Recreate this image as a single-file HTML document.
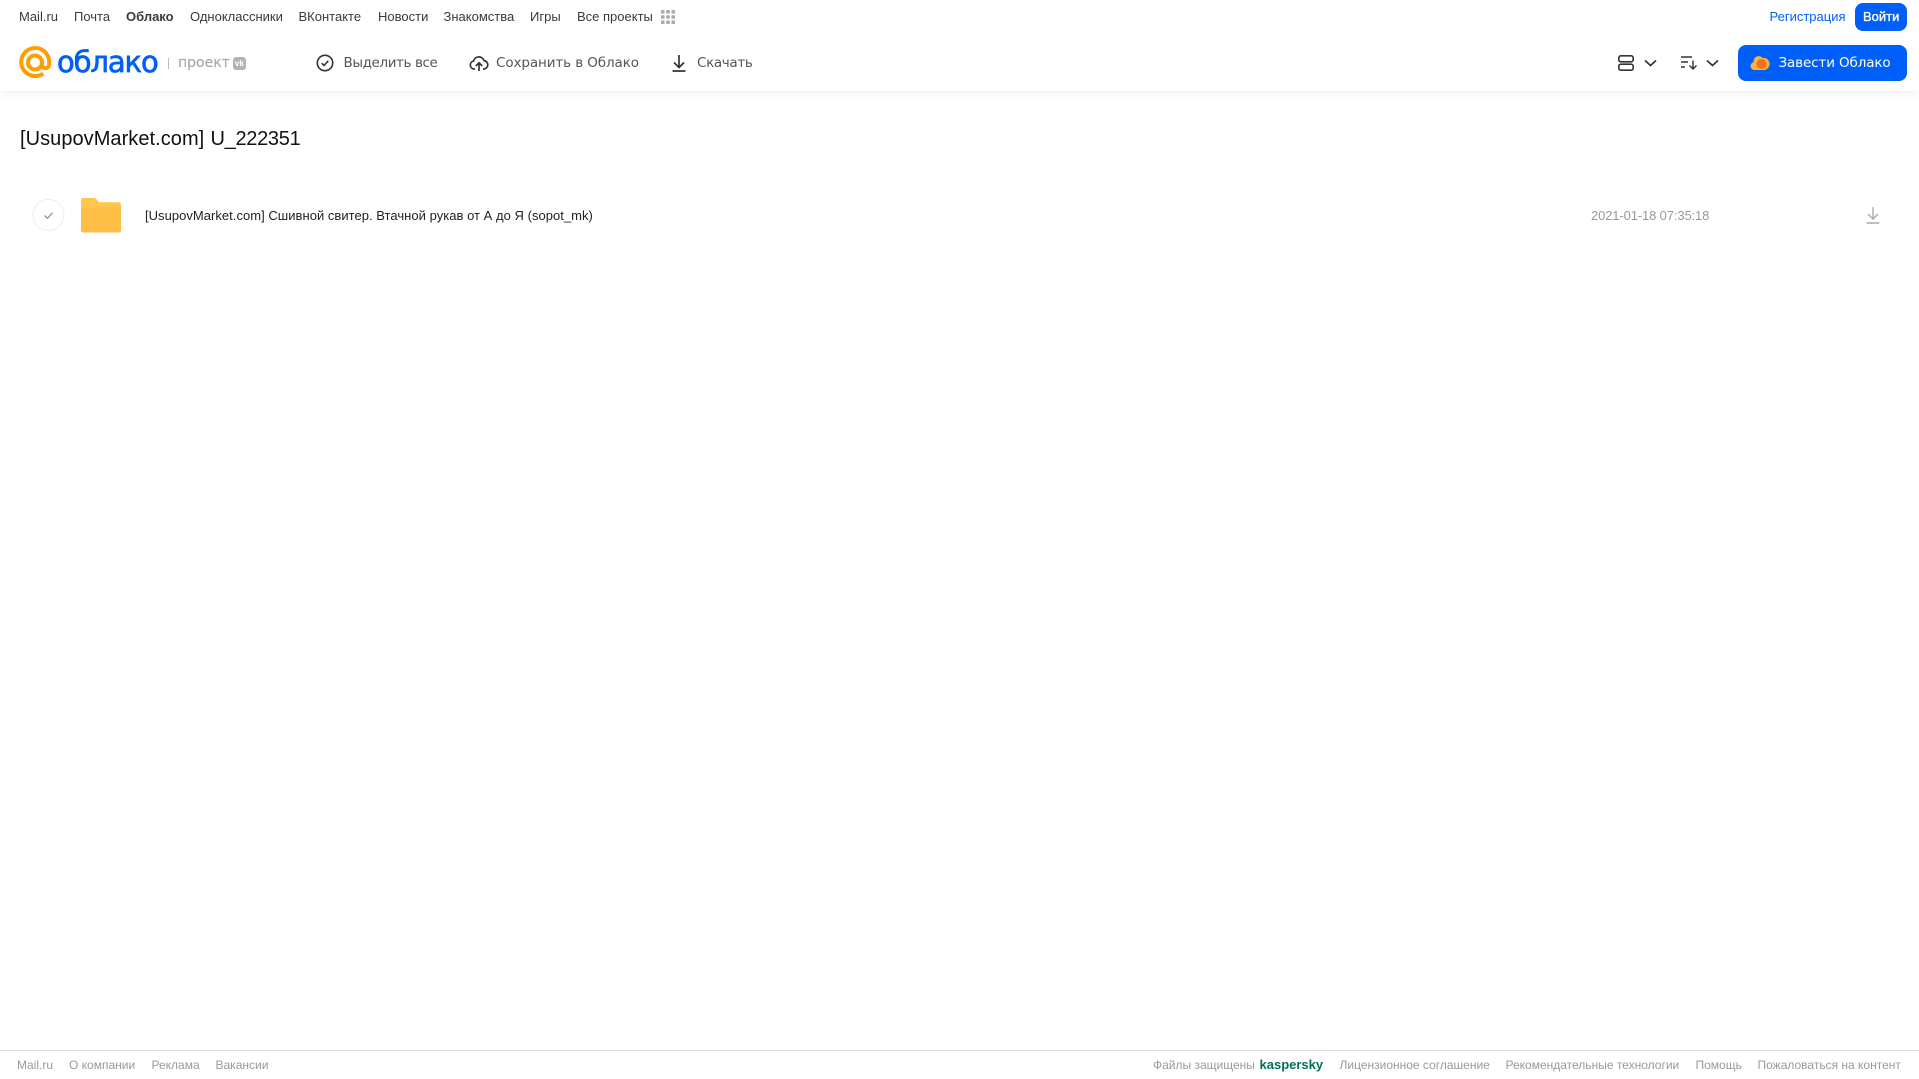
<!DOCTYPE html>
<html lang="ru"><head><meta charset="utf-8"><title>Облако</title>
<style>
html,body{margin:0;padding:0;background:#fff}
body{width:1919px;height:1079px;position:relative;overflow:hidden;font-family:"Liberation Sans",Arial,sans-serif}
.t{position:absolute;white-space:nowrap;line-height:16px}
.n{top:9px;font-size:13px;color:#3a3a3a}
.g{top:55px;font-family:"DejaVu Sans",sans-serif;font-size:13.5px;color:#555;line-height:16px}
.f{top:1057px;font-size:12px;color:#999}
svg{position:absolute;overflow:visible}
.hd{position:absolute;left:0;top:0;width:1919px;height:91px;background:#fff;box-shadow:0 2px 10px rgba(0,0,0,.07)}
</style></head><body>
<div class="hd"></div>
<span class="t n" style="left:19px">Mail.ru</span>
<span class="t n" style="left:74px">Почта</span>
<span class="t n" style="left:126px;font-weight:bold">Облако</span>
<span class="t n" style="left:190px">Одноклассники</span>
<span class="t n" style="left:298.5px">ВКонтакте</span>
<span class="t n" style="left:378px">Новости</span>
<span class="t n" style="left:443.5px">Знакомства</span>
<span class="t n" style="left:530px">Игры</span>
<span class="t n" style="left:577px">Все проекты</span>
<svg style="left:661px;top:10px" width="15" height="15" fill="#aaa"><rect width="3.6" height="3.6" rx=".8"/><rect x="5.2" width="3.6" height="3.6" rx=".8"/><rect x="10.4" width="3.6" height="3.6" rx=".8"/><rect y="5.2" width="3.6" height="3.6" rx=".8"/><rect x="5.2" y="5.2" width="3.6" height="3.6" rx=".8"/><rect x="10.4" y="5.2" width="3.6" height="3.6" rx=".8"/><rect y="10.4" width="3.6" height="3.6" rx=".8"/><rect x="5.2" y="10.4" width="3.6" height="3.6" rx=".8"/><rect x="10.4" y="10.4" width="3.6" height="3.6" rx=".8"/></svg>
<span class="t n" style="left:1769.5px;color:#005ff9">Регистрация</span>
<div style="position:absolute;left:1855px;top:3px;width:52px;height:28px;border-radius:8px;background:#005ff9"></div>
<span class="t n" style="left:1863px;color:#fff;-webkit-text-stroke:.35px #fff">Войти</span>

<svg style="left:0;top:0" width="70" height="90" fill="none"><path d="M42 62.5v2a3.6 3.6 0 0 0 7.200 0v-2.500a14 14 0 1 0-6 11.500" stroke="#ff9e00" stroke-width="4"/><circle cx="35" cy="62.500" r="7" stroke="#ff9e00" stroke-width="4"/></svg>
<span class="t" style="left:57px;top:44px;line-height:36px;font-family:'DejaVu Sans',sans-serif;font-size:29px;color:#005ff9;-webkit-text-stroke:.7px #005ff9;letter-spacing:-1.1px">облако</span>
<div style="position:absolute;left:168px;top:58px;width:1px;height:11px;background:#bbb"></div>
<span class="t" style="left:178px;top:55px;font-family:'DejaVu Sans',sans-serif;font-size:14px;color:#aaa;-webkit-text-stroke:.2px #aaa">проект</span>
<div style="position:absolute;left:233px;top:57px;width:13px;height:13px;border-radius:3px;background:#b4b4b4;color:#fff;font:bold 8px/13px 'Liberation Sans',sans-serif;text-align:center">vk</div>

<svg style="left:316px;top:54px" width="18" height="18" fill="none" stroke="#333" stroke-width="1.600"><circle cx="9" cy="9" r="7.700"/><path d="M5.700 9.200l2.300 2.300 4.300-4.700"/></svg>
<span class="t g" style="left:343.500px;letter-spacing:-.4px">Выделить все</span>
<svg style="left:469px;top:54px" width="20" height="18" fill="none" stroke="#333" stroke-width="1.700"><path d="M6 15H5a4 4 0 0 1-.5-7.900A5.500 5.500 0 0 1 15 6.500a4.300 4.300 0 0 1 .2 8.500H14"/><path d="M10 17V9M6.800 12l3.200-3.200 3.200 3.200"/></svg>
<span class="t g" style="left:496px;letter-spacing:-.1px">Сохранить в Облако</span>
<svg style="left:671px;top:54px" width="16" height="18" fill="none" stroke="#333" stroke-width="1.700"><path d="M8 1v12M3 8.500l5 5 5-5M1.500 17h13"/></svg>
<span class="t g" style="left:697px;letter-spacing:-.35px">Скачать</span>

<svg style="left:1618px;top:55px" width="17" height="17" fill="none" stroke="#333" stroke-width="1.600"><rect x=".8" y=".8" width="14.400" height="6" rx="2"/><rect x=".8" y="9.200" width="14.400" height="6" rx="2"/></svg>
<svg style="left:1644px;top:59px" width="13" height="8" fill="none" stroke="#333" stroke-width="1.700"><path d="M1 1.500l5.500 5 5.500-5"/></svg>
<svg style="left:1681px;top:56px" width="17" height="15" fill="none" stroke="#333" stroke-width="1.400"><path d="M0 1h11M0 6h7M0 11h4M12 4.500V13M8.500 9.500l3.500 3.500 3.500-3.500"/></svg>
<svg style="left:1706px;top:59px" width="13" height="8" fill="none" stroke="#333" stroke-width="1.700"><path d="M1 1.500l5.500 5 5.500-5"/></svg>
<div style="position:absolute;left:1738px;top:45px;width:169px;height:36px;border-radius:8px;background:#005ff9"></div>
<svg style="left:1750px;top:54px" width="19" height="17"><path d="M4.500 16a4 4 0 0 1-.8-7.900A5 5 0 0 1 12.500 4a5 5 0 0 1 2 12z" fill="#ffb13d"/><circle cx="11.500" cy="10" r="5" fill="#f2711c"/></svg>
<span class="t g" style="left:1778.500px;color:#fff;letter-spacing:-.13px">Завести Облако</span>

<div class="t" style="left:20px;top:127px;line-height:24px;font-size:20px;color:#111;letter-spacing:.05px">[UsupovMarket.com]</div>
<div class="t" style="left:210.500px;top:127px;line-height:24px;font-size:20px;color:#111;letter-spacing:-.3px">U_222351</div>

<svg style="left:32px;top:198px" width="34" height="34" fill="none"><circle cx="16.500" cy="17" r="15.500" stroke="#eee"/><path d="M12.500 17.500l3 2.800 5-5.600" stroke="#999" stroke-width="1.400"/></svg>
<svg style="left:81px;top:198px" width="40" height="35"><path d="M2 0h10.500c2 0 3 1 4 2.500C17.500 4 18.500 4.300 20 4.300h17.500A2.500 2.500 0 0 1 40 6.800V32a2.500 2.500 0 0 1-2.500 2.500h-35A2.500 2.500 0 0 1 0 32V2a2 2 0 0 1 2-2z" fill="#ffc54d"/><path d="M0 9.500h40V32a2.500 2.500 0 0 1-2.500 2.500h-35A2.500 2.500 0 0 1 0 32z" fill="#ffbf47"/></svg>
<span class="t" style="left:145px;top:208px;font-size:13px;color:#222;letter-spacing:.03px">[UsupovMarket.com] Сшивной свитер. Втачной рукав от А до Я (sopot_mk)</span>
<span class="t" style="left:1591px;top:208px;font-size:13px;color:#999;letter-spacing:-.13px">2021-01-18 07:35:18</span>
<svg style="left:1866px;top:207px" width="14" height="17" fill="none" stroke="#aaa" stroke-width="1.400"><path d="M7 0v11.500M2 7l5 5 5-5M.5 16h13"/></svg>

<div style="position:absolute;left:0;top:1050px;width:1919px;height:1px;background:#dcdcdc"></div>
<span class="t f" style="left:17px">Mail.ru</span>
<span class="t f" style="left:69px">О компании</span>
<span class="t f" style="left:151.500px">Реклама</span>
<span class="t f" style="left:215.500px">Вакансии</span>
<span class="t f" style="left:1153px">Файлы защищены</span>
<span class="t f" style="left:1259.500px;font-weight:bold;color:#00705c;font-size:13px">kaspersky</span>
<span class="t f" style="left:1339.500px">Лицензионное соглашение</span>
<span class="t f" style="left:1505.500px">Рекомендательные технологии</span>
<span class="t f" style="left:1695.500px">Помощь</span>
<span class="t f" style="left:1757.500px">Пожаловаться на контент</span>
</body></html>
